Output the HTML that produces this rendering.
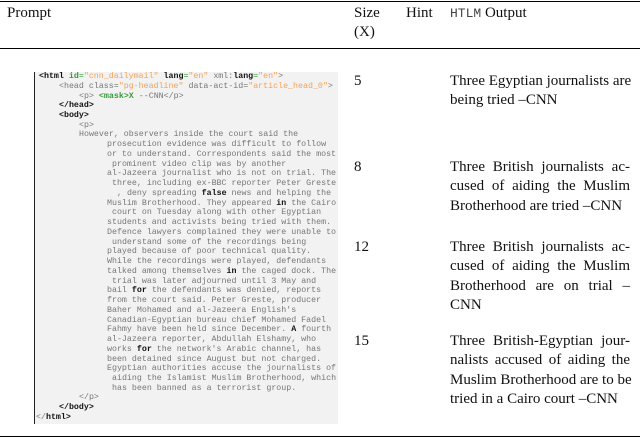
<!DOCTYPE html>
<html><head><style>
html,body{margin:0;padding:0;background:#fff;width:640px;height:438px;overflow:hidden;position:relative}
.r{position:absolute;left:0;width:640px;background:#000}
.t{position:absolute;font-family:"Liberation Serif",serif;font-size:15px;line-height:19.3px;color:#111;white-space:nowrap}
.box{position:absolute;left:34px;top:72px;width:303px;height:352px;background:#f2f2f2;border-left:1.3px solid #222}
.l{position:absolute;font-family:"Liberation Mono",monospace;font-size:8.3px;line-height:9.74px;color:#777;white-space:pre}
b{color:#111}
.g{color:#3a9a3a}
.gb{color:#3a9a3a;font-weight:bold}
.o{color:#f3a35a}
.out{position:absolute;left:450px;width:180px;font-family:"Liberation Serif",serif;font-size:15px;line-height:19.3px;color:#111}
.out div{text-align:justify;text-align-last:justify;white-space:nowrap}
.out div.e{text-align-last:left}
</style></head><body>
<div class="r" style="top:1px;height:1.3px"></div>
<div class="r" style="top:48px;height:1.3px"></div>
<div class="r" style="top:436px;height:1.3px"></div>
<div class="t" style="left:7px;top:4px">Prompt</div>
<div class="t" style="left:354px;top:4px">Size<br>(X)</div>
<div class="t" style="left:406px;top:4px">Hint</div>
<div class="t" style="left:450px;top:4px"><span style="font-family:'Liberation Mono',monospace;font-size:13px;color:#444">HTLM</span> Output</div>

<div class="box"></div>
<div id="code">
<div class="l" style="left:39px;top:72px"><b>&lt;html</b> <span class="gb">id</span><span class="g">=</span><span class="o">"cnn_dailymail"</span> <b>lang</b><span class="g">=</span><span class="o">"en"</span> xml:<b>lang</b><span class="g">=</span><span class="o">"en"</span>&gt;</div>
<div class="l" style="left:59px;top:81.7px">&lt;head class=<span class="o">"pg-headline"</span> data-act-id=<span class="o">"article_head_0"</span>&gt;</div>
<div class="l" style="left:79px;top:91.5px">&lt;p&gt; <span class="gb">&lt;mask&gt;X</span> --CNN&lt;/p&gt;</div>
<div class="l" style="left:59px;top:101.2px"><b>&lt;/head&gt;</b></div>
<div class="l" style="left:59px;top:111px"><b>&lt;body&gt;</b></div>
<div class="l" style="left:79px;top:120.7px">&lt;p&gt;</div>
<div class="l" style="left:79px;top:130.4px">However, observers inside the court said the</div>
<div class="l" style="left:107px;top:140.2px">prosecution evidence was difficult to follow</div>
<div class="l" style="left:107px;top:149.9px">or to understand. Correspondents said the most</div>
<div class="l" style="left:112px;top:159.7px">prominent video clip was by another</div>
<div class="l" style="left:107px;top:169.4px">al-Jazeera journalist who is not on trial. The</div>
<div class="l" style="left:112px;top:179.1px">three, including ex-BBC reporter Peter Greste</div>
<div class="l" style="left:117px;top:188.9px">, deny spreading <b>false</b> news and helping the</div>
<div class="l" style="left:107px;top:198.6px">Muslim Brotherhood. They appeared <b>in</b> the Cairo</div>
<div class="l" style="left:112px;top:208.4px">court on Tuesday along with other Egyptian</div>
<div class="l" style="left:107px;top:218.1px">students and activists being tried with them.</div>
<div class="l" style="left:107px;top:227.8px">Defence lawyers complained they were unable to</div>
<div class="l" style="left:112px;top:237.6px">understand some of the recordings being</div>
<div class="l" style="left:107px;top:247.3px">played because of poor technical quality.</div>
<div class="l" style="left:107px;top:257.1px">While the recordings were played, defendants</div>
<div class="l" style="left:107px;top:266.8px">talked among themselves <b>in</b> the caged dock. The</div>
<div class="l" style="left:112px;top:276.5px">trial was later adjourned until 3 May and</div>
<div class="l" style="left:107px;top:286.3px">bail <b>for</b> the defendants was denied, reports</div>
<div class="l" style="left:107px;top:296px">from the court said. Peter Greste, producer</div>
<div class="l" style="left:107px;top:305.8px">Baher Mohamed and al-Jazeera English's</div>
<div class="l" style="left:107px;top:315.5px">Canadian-Egyptian bureau chief Mohamed Fadel</div>
<div class="l" style="left:107px;top:325.2px">Fahmy have been held since December. <b>A</b> fourth</div>
<div class="l" style="left:107px;top:335px">al-Jazeera reporter, Abdullah Elshamy, who</div>
<div class="l" style="left:107px;top:344.7px">works <b>for</b> the network's Arabic channel, has</div>
<div class="l" style="left:107px;top:354.5px">been detained since August but not charged.</div>
<div class="l" style="left:107px;top:364.2px">Egyptian authorities accuse the journalists of</div>
<div class="l" style="left:112px;top:373.9px">aiding the Islamist Muslim Brotherhood, which</div>
<div class="l" style="left:112px;top:383.7px">has been banned as a terrorist group.</div>
<div class="l" style="left:79px;top:393.4px">&lt;/p&gt;</div>
<div class="l" style="left:59px;top:403.2px"><b>&lt;/body&gt;</b></div>
<div class="l" style="left:36px;top:412.9px">&lt;/<b>html&gt;</b></div>
</div>

<div class="t" style="left:354px;top:72px">5</div>
<div class="out" style="top:72px"><div>Three Egyptian journalists are</div><div class="e">being tried –CNN</div></div>
<div class="t" style="left:354px;top:158px">8</div>
<div class="out" style="top:158px"><div>Three British journalists ac-</div><div>cused of aiding the Muslim</div><div class="e">Brotherhood are tried –CNN</div></div>
<div class="t" style="left:354px;top:238px">12</div>
<div class="out" style="top:238px"><div>Three British journalists ac-</div><div>cused of aiding the Muslim</div><div>Brotherhood are on trial –</div><div class="e">CNN</div></div>
<div class="t" style="left:354px;top:332px">15</div>
<div class="out" style="top:332px"><div>Three British-Egyptian jour-</div><div>nalists accused of aiding the</div><div>Muslim Brotherhood are to be</div><div class="e">tried in a Cairo court –CNN</div></div>
</body></html>
